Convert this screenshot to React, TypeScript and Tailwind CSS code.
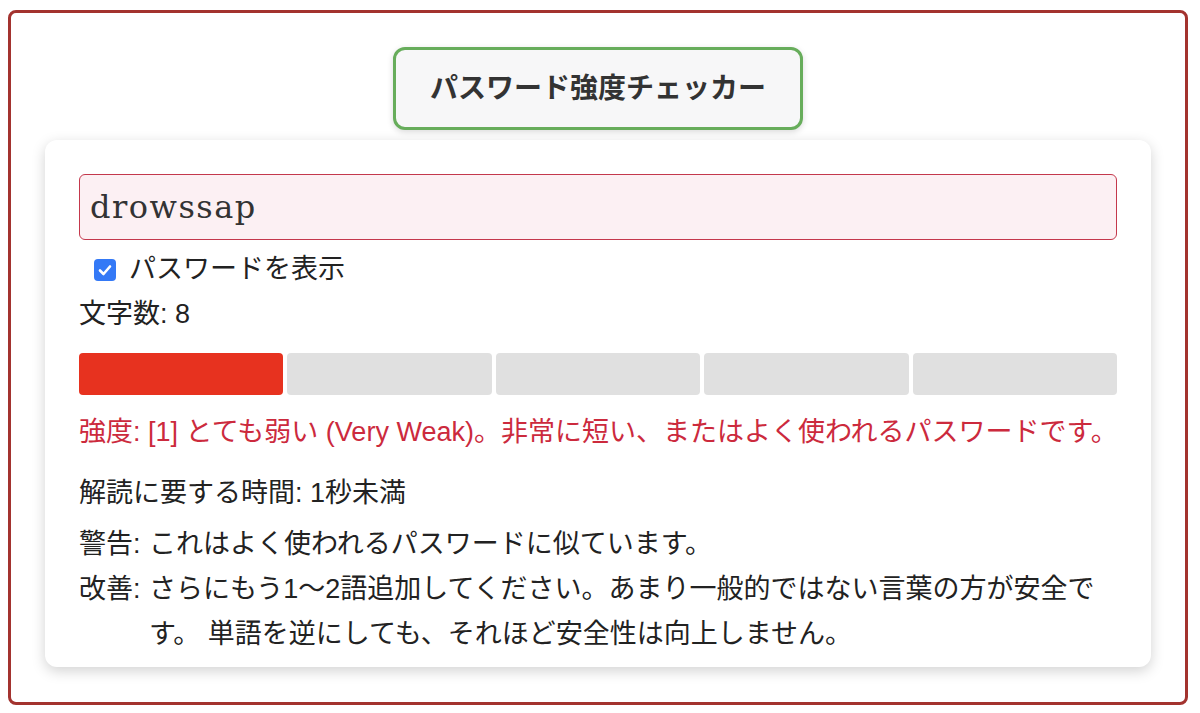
import React from "react";

const FONT = { fontFamily: '"Liberation Sans", "Noto Sans CJK JP", sans-serif' };

export default function App() {
  return (
    <div className="w-[1200px] h-[713px] bg-white overflow-hidden" style={FONT}>
      <div className="ml-[8px] mt-[10px] w-[1180px] h-[695px] border-[3px] border-[#a3332f] rounded-[8px] px-[34px] pt-[34px] flex flex-col items-center">
        <div className="w-[410px] h-[83px] border-[3px] border-[#67ad5b] rounded-[12px] bg-[#f7f7f8] shadow-[0_2px_6px_rgba(0,0,0,0.15)] flex items-center justify-center">
          <span className="text-[28px] font-bold text-[#333]">パスワード強度チェッカー</span>
        </div>
        <div className="mt-[10px] w-full h-[527px] bg-white rounded-[12px] shadow-[0_4px_14px_rgba(0,0,0,0.18)] px-[34px] pt-[34px] text-[27px] text-[#222]">
          <div className="h-[66px] border border-[#c4384c] rounded-[6px] bg-[#fcf0f3] flex items-center px-[10px]">
            <span className="text-[32px] text-[#333] tracking-[1.5px]" style={{ fontFamily: '"DejaVu Serif", serif' }}>drowssap</span>
          </div>
          <div className="mt-[7px] h-[45px] flex items-center pl-[15px]">
            <span className="w-[22px] h-[22px] rounded-[4px] bg-[#3479f6] flex items-center justify-center">
              <svg width="16" height="16" viewBox="0 0 16 16" fill="none">
                <path d="M3 8.5 L6.5 12 L13 4.5" stroke="white" strokeWidth="2.6" strokeLinecap="round" strokeLinejoin="round" />
              </svg>
            </span>
            <span className="ml-[13px] leading-[45px]">パスワードを表示</span>
          </div>
          <div className="h-[45px] leading-[45px]">文字数: 8</div>
          <div className="mt-[16px] h-[42px] grid grid-cols-5 gap-[4px]">
            <div className="rounded-[4px] bg-[#e7321f]" />
            <div className="rounded-[4px] bg-[#e0e0e0]" />
            <div className="rounded-[4px] bg-[#e0e0e0]" />
            <div className="rounded-[4px] bg-[#e0e0e0]" />
            <div className="rounded-[4px] bg-[#e0e0e0]" />
          </div>
          <div className="mt-[15px] leading-[45px] text-[#cc2a3d] whitespace-nowrap">
            強度: [1] とても弱い (Very Weak)。非常に短い、またはよく使われるパスワードです。
          </div>
          <div className="mt-[16px] leading-[45px]">解読に要する時間: 1秒未満</div>
          <div className="mt-[6px] flex leading-[45px]">
            <span className="shrink-0 w-[70px]">警告:</span>
            <span>これはよく使われるパスワードに似ています。</span>
          </div>
          <div className="flex leading-[45px]">
            <span className="shrink-0 w-[70px]">改善:</span>
            <span className="flex-1">さらにもう1〜2語追加してください。あまり一般的ではない言葉の方が安全です。 単語を逆にしても、それほど安全性は向上しません。</span>
          </div>
        </div>
      </div>
    </div>
  );
}
